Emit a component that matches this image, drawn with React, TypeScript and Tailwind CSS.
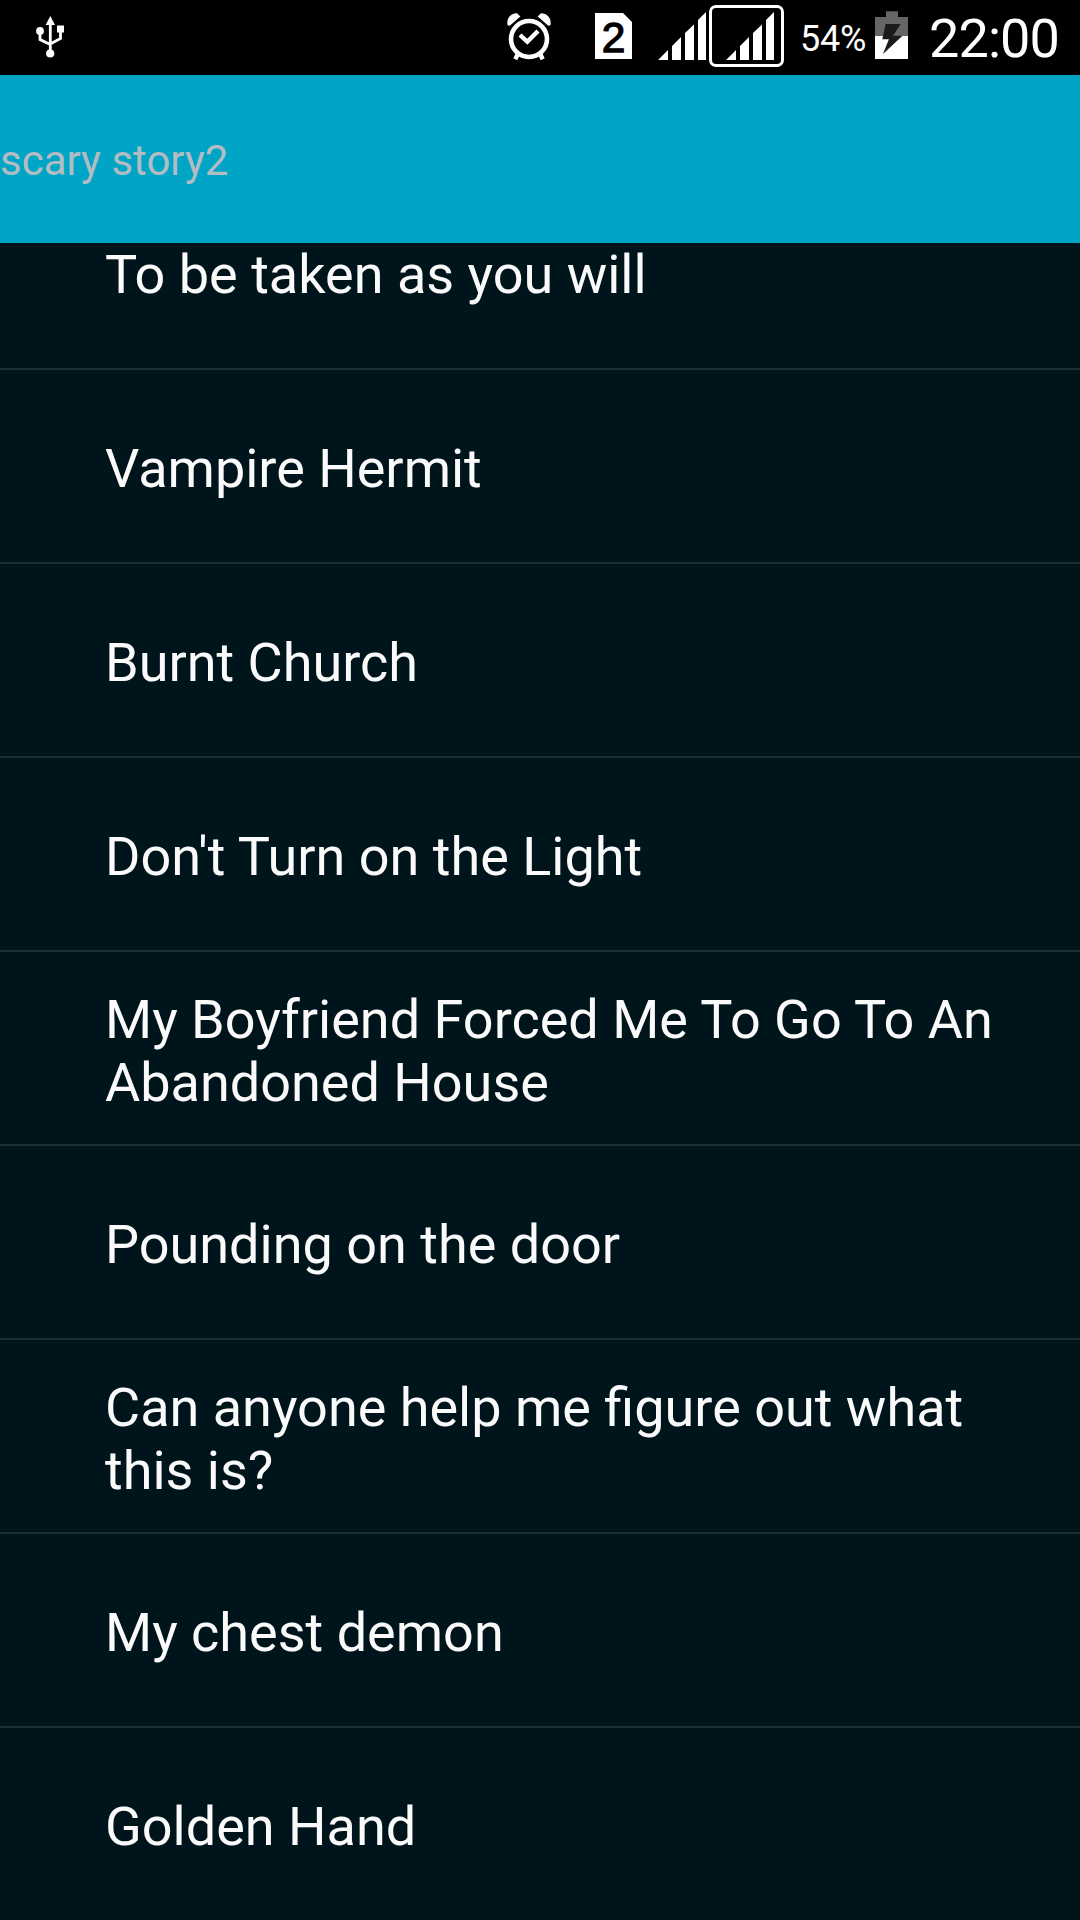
const stories = [
  'To be taken as you will',
  'Vampire Hermit',
  'Burnt Church',
  "Don't Turn on the Light",
  'My Boyfriend Forced Me To Go To An Abandoned House',
  'Pounding on the door',
  'Can anyone help me figure out what this is?',
  'My chest demon',
  'Golden Hand',
];

function UsbIcon() {
  return (
    <svg className="ml-9 h-[75px] w-7 shrink-0" viewBox="36 0 28 75" fill="none">
      <path d="M50.3 22V53M40 31V39.5L50.3 44.5M60.5 30V38.5L50.3 44" stroke="#fff" strokeWidth="2.8" />
      <path d="M50.3 16L55 25H45.6ZM57 25.5h7v7h-7Z" fill="#fff" />
      <circle cx="40" cy="31" r="3.9" fill="#fff" />
      <circle cx="50.2" cy="53.5" r="4.1" fill="#fff" />
    </svg>
  );
}

function AlarmIcon() {
  return (
    <svg className="h-[75px] w-[46px] shrink-0" viewBox="506 0 46 75" fill="none" stroke="#fff">
      <circle cx="529" cy="39" r="18" strokeWidth="4.6" />
      <path d="M520 35L527.3 41.7L538 31" strokeWidth="4.4" />
      <path d="M517.8 54L515.3 59.3M540.2 54L542.7 59.3" strokeWidth="4.4" />
      <path d="M507.7 25.6C505.8 18.5 511 13 517 13.2L520.3 16.5L510 25.6ZM550.3 25.6C552.2 18.5 547 13 541 13.2L537.7 16.5L548 25.6Z" fill="#fff" stroke="none" />
    </svg>
  );
}

function SimIcon() {
  return (
    <svg className="ml-[43px] h-[75px] w-[37px] shrink-0" viewBox="595 0 37 75">
      <path d="M595 13H623L632 22V59H595Z" fill="#fff" />
      <text x="601.7" y="52.3" fontFamily="Liberation Sans, Arial, sans-serif" fontSize="42.5" fill="#000" stroke="#000" strokeWidth="1.3">2</text>
    </svg>
  );
}

function SignalIcon() {
  return (
    <svg className="h-[75px] w-12 shrink-0" viewBox="658 0 48 75" fill="#fff">
      <path d="M658 60L668 50V60ZM672 46L681 37V60H672ZM685 33L694 24.5V60H685ZM698 20L706 12V60H698Z" />
    </svg>
  );
}

function BatteryIcon() {
  return (
    <svg className="h-[75px] w-[33px] shrink-0" viewBox="875 0 33 75">
      <path d="M875 17H886V11.3H898V17H908V36H875Z" fill="#666" />
      <path d="M875 36H908V59H875Z" fill="#fff" />
      <path d="M885.7 24H900.7L893 35.7H902.5L883 54L888.9 39.3H882.3Z" fill="#1a1a1a" />
    </svg>
  );
}

function StatusBar() {
  return (
    <div className="flex h-[75px] shrink-0 items-center bg-black text-white">
      <UsbIcon />
      <div className="ml-auto flex items-center">
        <AlarmIcon />
        <SimIcon />
        <div className="ml-[26px] flex items-center">
          <SignalIcon />
          <div className="ml-[3px] mt-[-3px] flex h-[62px] w-[75px] items-center justify-center overflow-hidden rounded-[7px] border-[3px] border-white pl-[7px] pt-[3px]">
            <SignalIcon />
          </div>
        </div>
        <span className="ml-[16px] w-[75px] whitespace-nowrap pt-[2px] text-[36px] leading-[42px] tracking-[-0.2px]">54%</span>
        <BatteryIcon />
        <span className="ml-[21px] w-[151px] whitespace-nowrap pt-[2px] text-[54px] leading-[64px] tracking-[-0.9px]">22:00</span>
      </div>
    </div>
  );
}

export default function App() {
  return (
    <div className="flex h-[1920px] w-[1080px] flex-col overflow-hidden bg-[#00151b] font-[Roboto,sans-serif]">
      <StatusBar />
      <header className="flex h-[168px] shrink-0 items-center bg-[#00a5c6] pt-[4px] text-[42px] leading-[50px] text-[#b2bcc2]">
        scary story2
      </header>
      <main className="min-h-0 flex-1 overflow-hidden">
        <ul className="-mt-[67px]">
          {stories.map((story) => (
            <li key={story} className="flex h-[194px] items-center border-b-2 border-[#1c2d33] pl-[105px] pr-[48px] pt-[5px] text-[54px] leading-[63px] text-[#fafafa]">
              {story}
            </li>
          ))}
        </ul>
      </main>
    </div>
  );
}
